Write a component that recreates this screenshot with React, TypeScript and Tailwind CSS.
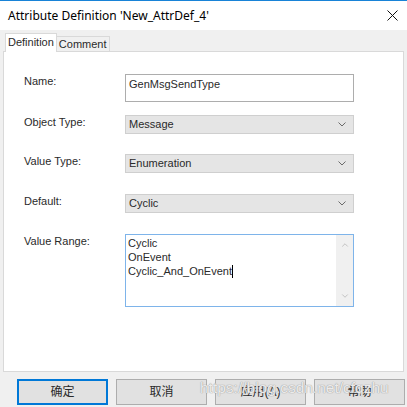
import { ChevronDown, ChevronUp } from "lucide-react";

const ui = { fontFamily: '"Liberation Sans", "Noto Sans CJK SC", Arial, sans-serif' };

const Chevron = () => (
  <svg width="8" height="5" viewBox="0 0 8 5" className="shrink-0">
    <path d="M0.5 0.5 L4 4 L7.5 0.5" fill="none" stroke="#6a6a6a" strokeWidth="1" />
  </svg>
);

const Select = ({ value }: { value: string }) => (
  <div className="w-[229px] h-[19px] bg-[#e5e5e5] border border-[#cfcfcf] flex items-center justify-between pl-[3px] pr-[7px] text-[11px] text-[#2a2a2a]">
    <span>{value}</span>
    <Chevron />
  </div>
);

const Row = ({ label, children, mt }: { label: string; children: React.ReactNode; mt: string }) => (
  <div className={`flex items-start ${mt}`}>
    <div className="w-[101px] text-[11px] leading-[14px] text-[#2a2a2a]">{label}</div>
    {children}
  </div>
);

const buttons = ["确定", "取消", "应用(A)", "帮助"];

export default function App() {
  return (
    <div className="w-[407px] h-[407px] bg-[#f0f0f0] flex flex-col overflow-hidden relative" style={ui}>
      {/* title bar */}
      <div className="h-[30px] bg-white border-t border-[#1883d7] flex items-center justify-between pl-[8px] pr-[9px]">
        <span className="text-[12px] text-black" style={{ fontFamily: '"Noto Sans", "Liberation Sans", sans-serif' }}>
          Attribute Definition 'New_AttrDef_4'
        </span>
        <svg width="11" height="11" viewBox="0 0 11 11">
          <path d="M0.5 0.5 L10.5 10.5 M10.5 0.5 L0.5 10.5" stroke="#111" strokeWidth="1" />
        </svg>
      </div>

      {/* tabs */}
      <div className="flex items-end pl-[5px] pt-[3px] h-[21px] relative z-10">
        <div className="h-[19px] bg-white border border-b-0 border-[#d9d9d9] px-[2px] text-[11px] leading-[16px] text-[#2a2a2a] -mb-px">
          Definition
        </div>
        <div className="h-[15px] bg-[#f0f0f0] border border-l-0 border-b-0 border-[#d9d9d9] px-[2px] text-[11px] leading-[14px] text-[#2a2a2a]">
          Comment
        </div>
      </div>

      {/* panel */}
      <div className="mx-[3px] h-[321px] bg-white border border-[#d9d9d9] pl-[20px] pt-[22px]">
        <Row label="Name:" mt="mt-0">
          <div className="w-[229px] h-[28px] border border-[#adadad] pl-[3px] pt-[2px] text-[11px] leading-[14px] text-[#2a2a2a]">
            GenMsgSendType
          </div>
        </Row>
        <Row label="Object Type:" mt="mt-[13px]">
          <Select value="Message" />
        </Row>
        <Row label="Value Type:" mt="mt-[20px]">
          <Select value="Enumeration" />
        </Row>
        <Row label="Default:" mt="mt-[21px]">
          <Select value="Cyclic" />
        </Row>
        <Row label="Value Range:" mt="mt-[21px]">
          <div className="w-[229px] h-[73px] border border-[#7eb4ea] flex">
            <div className="flex-1 pl-[2px] pt-[1px] text-[11px] leading-[14px] text-[#2a2a2a]">
              <div>Cyclic</div>
              <div>OnEvent</div>
              <div className="flex items-center">
                Cyclic_And_OnEvent<span className="inline-block w-px h-[13px] bg-black" />
              </div>
            </div>
            <div className="w-[17px] bg-[#f0f0f0] flex flex-col items-center justify-between py-[5px] text-[#a6a6a6]">
              <ChevronUp size={10} strokeWidth={1.5} />
              <ChevronDown size={10} strokeWidth={1.5} />
            </div>
          </div>
        </Row>
      </div>

      {/* buttons */}
      <div className="flex gap-[8px] pl-[17px] mt-[7px]">
        {buttons.map((b, i) => (
          <div
            key={b}
            className={`w-[91px] h-[26px] bg-[#e1e1e1] flex items-center justify-center text-[12px] text-[#2a2a2a] ${
              i === 0 ? "border-2 border-[#0078d7]" : "border border-[#adadad]"
            }`}
          >
            {b}
          </div>
        ))}
      </div>

      {/* watermark */}
      <div
        className="absolute left-[200px] top-[378px] text-[15.5px] leading-[20px] text-white/80 pointer-events-none"
        style={{ fontFamily: '"Liberation Sans", Arial, sans-serif', textShadow: "0 0 1px #9a9a9a, 0 0 1px #9a9a9a" }}
      >
        https://blog.csdn.net/cfqzhu
      </div>
    </div>
  );
}
